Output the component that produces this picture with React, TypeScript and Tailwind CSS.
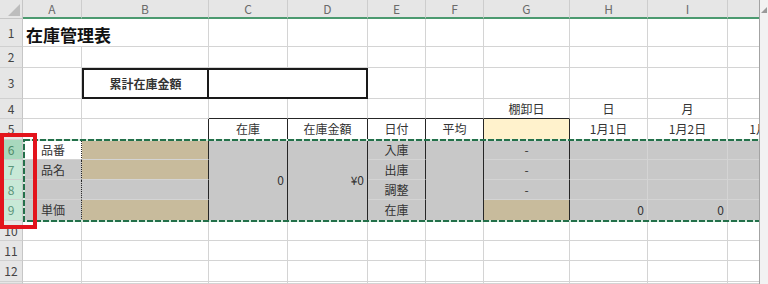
import React from 'react';

type C = {
  t?: React.ReactNode;
  r?: 'g' | 'd' | 'dot' | 'n';
  b?: 'g' | 'd' | 'n';
  bg?: 'w' | 's' | 't' | 'y';
  a?: 'l' | 'c' | 'r';
  cls?: string;
};

const R = {
  g: 'border-r border-r-[#d4d4d4]',
  d: 'border-r border-r-[#262626]',
  dot: 'border-r border-r-[#262626] [border-right-style:dotted]',
  n: '',
};
const B = {
  g: 'border-b border-b-[#d4d4d4]',
  d: 'border-b border-b-[#262626]',
  n: '',
};
const BG = { w: 'bg-white', s: 'bg-[#c8c8c8]', t: 'bg-[#c8bb9c]', y: 'bg-[#fff2cc]' };
const AL = { l: 'justify-start', c: 'justify-center', r: 'justify-end pr-[3px]' };

// column J is cut off by the window edge
const J: C = { r: 'n', cls: 'overflow-hidden' };
const JS: C = { r: 'n', bg: 's', cls: 'overflow-hidden' };

const rows: { n: number; cells: C[] }[] = [
  {
    n: 1,
    cells: [
      { t: <span className="pl-[3px] pt-[3px] text-[17px] font-bold text-[#111]">在庫管理表</span>, r: 'n' },
      {}, {}, {}, {}, {}, {}, {}, {}, J,
    ],
  },
  { n: 2, cells: [{}, {}, {}, {}, {}, {}, {}, {}, {}, J] },
  {
    n: 3,
    cells: [
      {},
      { t: '累計在庫金額', r: 'n', b: 'n', a: 'c', cls: 'border-2 border-[#1a1a1a] font-bold text-[#222]' },
      { r: 'n', b: 'n', cls: 'col-span-2 border-y-2 border-r-2 border-[#1a1a1a]' },
      {}, {}, {}, {}, {}, J,
    ],
  },
  {
    n: 4,
    cells: [
      {}, {}, { b: 'd' }, { b: 'd' }, { b: 'd' }, { b: 'd' },
      { t: '棚卸日', b: 'd', a: 'c' },
      { t: '日', a: 'c' },
      { t: '月', a: 'c' },
      J,
    ],
  },
  {
    n: 5,
    cells: [
      {},
      { r: 'd' },
      { t: '在庫', r: 'd', a: 'c' },
      { t: '在庫金額', r: 'd', a: 'c' },
      { t: '日付', r: 'd', a: 'c' },
      { t: '平均', r: 'd', a: 'c' },
      { r: 'd', bg: 'y' },
      { t: '1月1日', a: 'c' },
      { t: '1月2日', a: 'c' },
      { t: <div className="w-[80px] shrink-0 text-center">1月3日</div>, r: 'n', cls: 'overflow-hidden' },
    ],
  },
  {
    n: 6,
    cells: [
      { t: '品番', r: 'dot', bg: 'w', cls: 'pl-[18px]' },
      { r: 'd', bg: 't' },
      { t: '0', r: 'd', bg: 's', a: 'r', cls: 'row-span-4' },
      { t: '¥0', r: 'd', bg: 's', a: 'r', cls: 'row-span-4' },
      { t: '入庫', r: 'd', bg: 's', a: 'c' },
      { r: 'd', bg: 's', cls: 'row-span-4' },
      { t: '-', r: 'd', bg: 's', a: 'c' },
      { bg: 's' },
      { bg: 's' },
      JS,
    ],
  },
  {
    n: 7,
    cells: [
      { t: '品名', r: 'dot', bg: 's', cls: 'pl-[18px]' },
      { r: 'd', bg: 't' },
      { t: '出庫', r: 'd', bg: 's', a: 'c' },
      { t: '-', r: 'd', bg: 's', a: 'c' },
      { bg: 's' },
      { bg: 's' },
      JS,
    ],
  },
  {
    n: 8,
    cells: [
      { r: 'dot', bg: 's' },
      { r: 'd', bg: 's' },
      { t: '調整', r: 'd', bg: 's', a: 'c' },
      { t: '-', r: 'd', bg: 's', a: 'c' },
      { bg: 's' },
      { bg: 's' },
      JS,
    ],
  },
  {
    n: 9,
    cells: [
      { t: '単価', r: 'dot', bg: 's', cls: 'pl-[18px]' },
      { r: 'd', bg: 't' },
      { t: '在庫', r: 'd', bg: 's', a: 'c' },
      { r: 'd', bg: 't' },
      { t: '0', bg: 's', a: 'r' },
      { t: '0', bg: 's', a: 'r' },
      JS,
    ],
  },
  { n: 10, cells: [{}, {}, {}, {}, {}, {}, {}, {}, {}, J] },
  { n: 11, cells: [{}, {}, {}, {}, {}, {}, {}, {}, {}, J] },
  { n: 12, cells: [{}, {}, {}, {}, {}, {}, {}, {}, {}, J] },
  // sliver of row 13 at the bottom edge
  { n: 13, cells: [{}, {}, {}, {}, {}, {}, {}, {}, {}, J] },
];

const cols = ['A', 'B', 'C', 'D', 'E', 'F', 'G', 'H', 'I'];

const rowHead = (n: number) => {
  if (n === 6) return 'bg-[#a8d8bd] text-[#4d8a68]';
  if (n >= 7 && n <= 9) return 'bg-[#c8e9d7] text-[#5b957a]';
  return 'bg-[#e6e6e6] text-[#444]';
};

const Cell = ({ c }: { c: C }) => {
  const { t, r = 'g', b = 'g', bg, a = 'l', cls = '' } = c;
  return (
    <div
      className={`flex items-center whitespace-nowrap text-[12px] leading-none text-[#333] ${R[r]} ${B[b]} ${bg ? BG[bg] : ''} ${AL[a]} ${cls}`}
    >
      {t}
    </div>
  );
};

export default function App() {
  return (
    <div className="relative h-[284px] w-[768px] overflow-hidden bg-white font-['Noto_Sans_CJK_JP',sans-serif]">
      <div className="grid h-[284px] w-[768px] grid-cols-[23px_59px_127px_79px_80px_58px_58px_86px_78px_80px_31px_9px] grid-rows-[19px_28px_21px_31px_20px_21px_20px_20px_20px_21px_20px_20px_21px_2px]">
        {/* scrollbar strip */}
        <div className="col-start-12 row-span-full row-start-1 border-l border-l-[#a3a3a3] bg-[#f2f2f2]">
          <svg width="9" height="16" viewBox="0 0 9 16">
            <polygon points="1,13 7,13 7,7" fill="#9a9a9a" />
          </svg>
        </div>

        {/* column headers */}
        <div className="border-r border-b border-r-[#c6c6c6] border-b-[#c6c6c6] bg-[#e6e6e6]">
          <svg width="22" height="18" viewBox="0 0 22 18">
            <polygon points="20,4 20,16 8,16" fill="#bdbdbd" />
          </svg>
        </div>
        {cols.map((l) => (
          <div
            key={l}
            className="flex items-center justify-center border-r border-b-2 border-r-[#cdcdcd] border-b-[#4c9a70] bg-[#e6e6e6] text-[12px] leading-none text-[#6a6a6a]"
          >
            {l}
          </div>
        ))}
        <div className="border-b-2 border-b-[#4c9a70] bg-[#e6e6e6]" />

        {rows.map((row) => (
          <React.Fragment key={row.n}>
            <div
              className={`flex items-center justify-center border-r border-b border-r-[#c6c6c6] border-b-[#d0d0d0] text-[12px] leading-none ${rowHead(row.n)}`}
            >
              {row.n < 13 ? row.n : null}
            </div>
            {row.cells.map((c, i) => (
              <Cell key={i} c={c} />
            ))}
          </React.Fragment>
        ))}
      </div>

      {/* copy marquee around rows 6-9 */}
      <svg className="pointer-events-none absolute left-0 top-0" width="759" height="284">
        <rect x="24" y="140" width="800" height="81" fill="none" stroke="#d3ecdd" strokeWidth="2" />
        <rect x="24" y="140" width="800" height="81" fill="none" stroke="#23704a" strokeWidth="2" strokeDasharray="6 2" />
      </svg>

      {/* red highlight on row numbers */}
      <div className="pointer-events-none absolute left-0 top-[133px] h-[96px] w-[37px] border-4 border-[#e3141c]" />
    </div>
  );
}
